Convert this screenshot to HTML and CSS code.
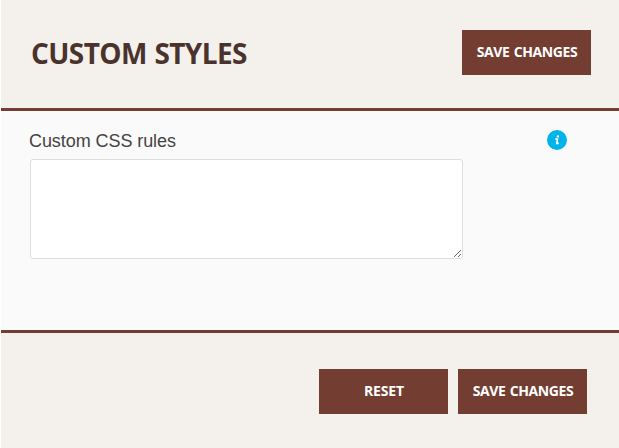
FILE: index.html
```html
<!DOCTYPE html>
<html lang="en">
<head>
<meta charset="utf-8">
<title>Custom Styles</title>
<link rel="stylesheet" href="styles.css">
</head>
<body>
<main class="panel">
  <header class="header">
    <h1>CUSTOM STYLES</h1>
    <button class="btn" type="button">SAVE CHANGES</button>
  </header>
  <section class="content">
    <div class="field">
      <label for="css">Custom CSS rules</label>
      <textarea id="css"></textarea>
    </div>
    <svg class="info" viewBox="0 0 20 20" role="img" aria-label="Info">
      <circle cx="10" cy="10" r="10" fill="#00b3e8"/>
      <circle cx="10.9" cy="6.4" r="1.2" fill="#fff"/>
      <path d="M8.2 9H10.4L9.8 13.3H11.7" fill="none" stroke="#fff" stroke-width="1.7"/>
    </svg>
  </section>
  <footer class="footer">
    <button class="btn btn-reset" type="button">RESET</button>
    <button class="btn" type="button">SAVE CHANGES</button>
  </footer>
</main>
</body>
</html>
```
FILE: styles.css
```css
* { box-sizing: border-box; }
body { margin: 0; background: #fff; }
.panel {
  width: 618px;
  height: 448px;
  margin-left: 1px;
  display: flex;
  flex-direction: column;
  background: #f4f0eb;
}
.header {
  height: 111px;
  padding: 30px 28px 0 30px;
  display: flex;
  justify-content: space-between;
  align-items: flex-start;
  border-bottom: 3px solid #733e31;
}
h1 {
  margin: 0;
  font: 700 28px/47px "Open Sans", sans-serif;
  letter-spacing: -0.6px;
  word-spacing: 1px;
  color: #4a332c;
}
.btn {
  width: 129px;
  height: 45px;
  padding: 0 0 2px 1px;
  border: 0;
  background: #733e31;
  color: #fff;
  font: 700 14px/43px "Open Sans", sans-serif;
  letter-spacing: -0.4px;
  word-spacing: 1px;
  white-space: nowrap;
}
.btn-reset { letter-spacing: -0.15px; }
.content {
  height: 222px;
  padding: 19px 52px 0 28px;
  display: flex;
  justify-content: space-between;
  align-items: flex-start;
  background: #fafafa;
  border-bottom: 3px solid #733e31;
}
.field { display: flex; flex-direction: column; }
label {
  font: 18px/22px "Liberation Sans", Arial, sans-serif;
  letter-spacing: -0.07px;
  color: #444;
}
textarea {
  width: 433px;
  height: 100px;
  margin: 7px 0 0 1px;
  border: 1px solid #ddd;
  border-radius: 3px;
  background: #fff;
  resize: both;
}
.info { display: block; width: 20px; height: 20px; }
.footer {
  flex: 1;
  padding: 36px 32px 0 0;
  display: flex;
  justify-content: flex-end;
  align-items: flex-start;
  gap: 10px;
}
```
